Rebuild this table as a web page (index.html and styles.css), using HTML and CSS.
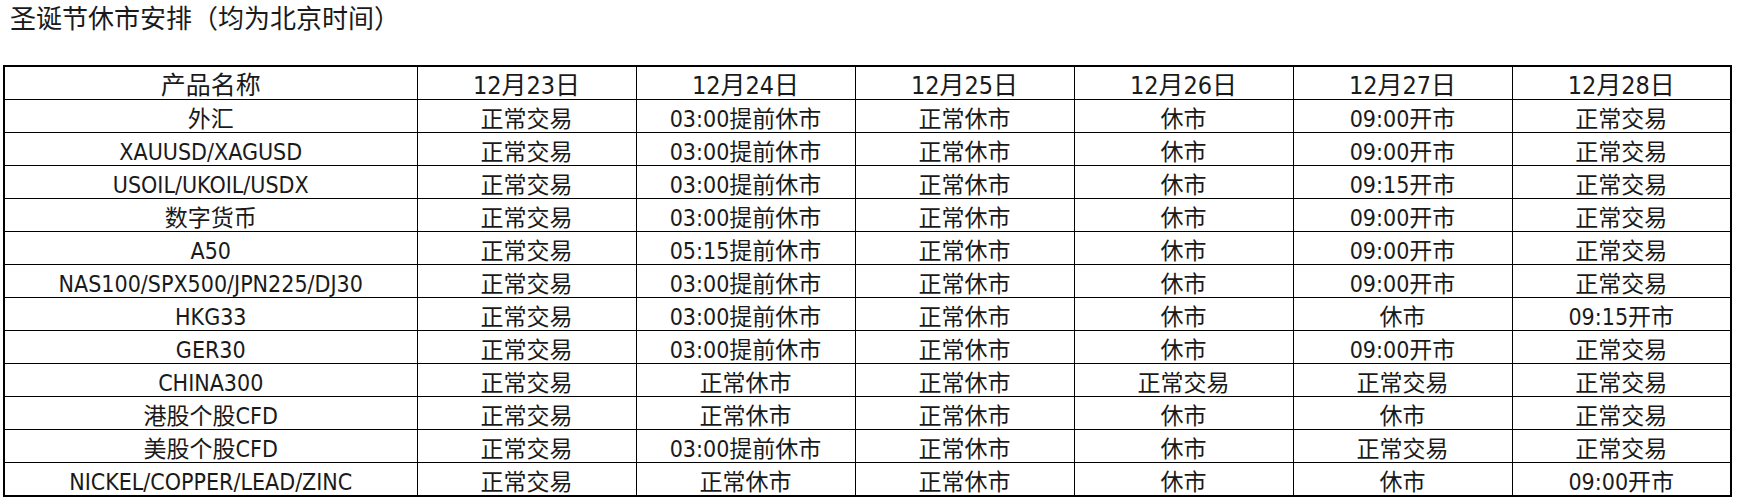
FILE: index.html
```html
<!DOCTYPE html>
<html lang="zh-CN">
<head>
<meta charset="utf-8">
<link rel="stylesheet" href="styles.css">
</head>
<body>
<div class="page">
  <div class="title">圣诞节休市安排（均为北京时间）</div>
  <table class="sched">
    <colgroup>
      <col class="c-name">
      <col class="c-day"><col class="c-day"><col class="c-day"><col class="c-day"><col class="c-day"><col class="c-day">
    </colgroup>
    <thead>
      <tr><th>产品名称</th><th>12月23日</th><th>12月24日</th><th>12月25日</th><th>12月26日</th><th>12月27日</th><th>12月28日</th></tr>
    </thead>
    <tbody>
      <tr><td>外汇</td><td>正常交易</td><td>03:00提前休市</td><td>正常休市</td><td>休市</td><td>09:00开市</td><td>正常交易</td></tr>
      <tr><td>XAUUSD/XAGUSD</td><td>正常交易</td><td>03:00提前休市</td><td>正常休市</td><td>休市</td><td>09:00开市</td><td>正常交易</td></tr>
      <tr><td>USOIL/UKOIL/USDX</td><td>正常交易</td><td>03:00提前休市</td><td>正常休市</td><td>休市</td><td>09:15开市</td><td>正常交易</td></tr>
      <tr><td>数字货币</td><td>正常交易</td><td>03:00提前休市</td><td>正常休市</td><td>休市</td><td>09:00开市</td><td>正常交易</td></tr>
      <tr><td>A50</td><td>正常交易</td><td>05:15提前休市</td><td>正常休市</td><td>休市</td><td>09:00开市</td><td>正常交易</td></tr>
      <tr><td>NAS100/SPX500/JPN225/DJ30</td><td>正常交易</td><td>03:00提前休市</td><td>正常休市</td><td>休市</td><td>09:00开市</td><td>正常交易</td></tr>
      <tr><td>HKG33</td><td>正常交易</td><td>03:00提前休市</td><td>正常休市</td><td>休市</td><td>休市</td><td>09:15开市</td></tr>
      <tr><td>GER30</td><td>正常交易</td><td>03:00提前休市</td><td>正常休市</td><td>休市</td><td>09:00开市</td><td>正常交易</td></tr>
      <tr><td>CHINA300</td><td>正常交易</td><td>正常休市</td><td>正常休市</td><td>正常交易</td><td>正常交易</td><td>正常交易</td></tr>
      <tr><td>港股个股CFD</td><td>正常交易</td><td>正常休市</td><td>正常休市</td><td>休市</td><td>休市</td><td>正常交易</td></tr>
      <tr><td>美股个股CFD</td><td>正常交易</td><td>03:00提前休市</td><td>正常休市</td><td>休市</td><td>正常交易</td><td>正常交易</td></tr>
      <tr><td>NICKEL/COPPER/LEAD/ZINC</td><td>正常交易</td><td>正常休市</td><td>正常休市</td><td>休市</td><td>休市</td><td>09:00开市</td></tr>
    </tbody>
  </table>
</div>
</body>
</html>
```

FILE: styles.css
```css
html, body {
  margin: 0;
  padding: 0;
  background: #ffffff;
}
body {
  font-family: "DejaVu Sans Condensed", "Noto Sans CJK SC", sans-serif;
  color: #1a1a1a;
}
.page {
  padding: 0 0 0 3px;
}
.title {
  height: 65px;
  padding-left: 7px;
  font-family: "Noto Sans CJK SC", sans-serif;
  font-size: 26px;
  line-height: 34px;
  box-sizing: border-box;
}
.sched {
  border-collapse: collapse;
  table-layout: fixed;
  width: 1726px;
  border: 2px solid #000000;
}
.c-name { width: 413px; }
.c-day { width: 219px; }
.sched th,
.sched td {
  border: 1px solid #000000;
  height: 33px;
  padding: 6px 0 0 0;
  box-sizing: border-box;
  text-align: center;
  vertical-align: top;
  font-size: 23px;
  font-weight: normal;
  line-height: 26px;
  white-space: nowrap;
}
.sched th {
  font-size: 25px;
}
```
